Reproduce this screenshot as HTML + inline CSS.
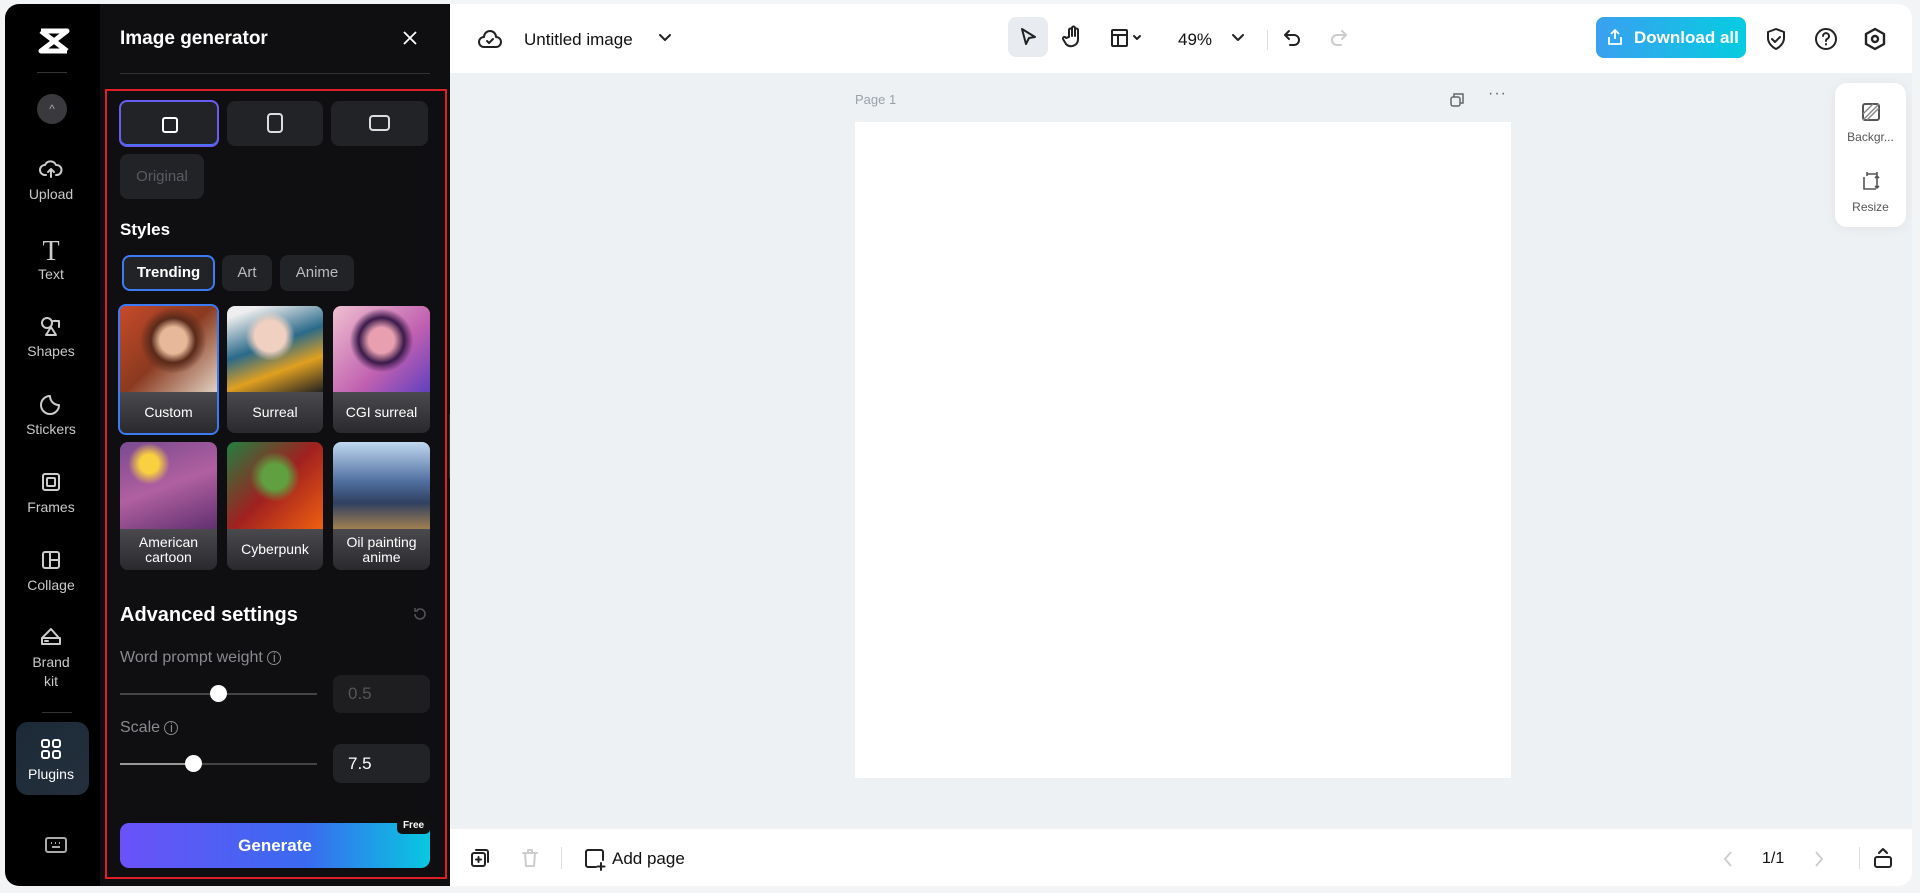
<!DOCTYPE html>
<html><head><meta charset="utf-8"><style>
*{box-sizing:border-box;margin:0;padding:0}
body{width:1920px;height:893px;overflow:hidden;background:#f3f4f6;font-family:"Liberation Sans",sans-serif;position:relative}
.abs{position:absolute}
.side{left:5px;top:4px;width:96px;height:882px;background:#000;border-radius:14px 0 0 14px}
.nav{position:absolute;left:0;width:92px;text-align:center;color:#c9c9cc;font-size:14px}
.nav svg{display:block;margin:0 auto 6px}
.panel{left:100px;top:4px;width:350px;height:882px;background:#0f0f11}
.main{left:450px;top:4px;width:1462px;height:882px;background:#eef1f4;border-radius:0 14px 14px 0;overflow:hidden}
.btn{position:absolute;background:#222327;border-radius:8px}
.card{position:absolute;border-radius:8px;overflow:hidden;background:#2a2a2e}
.card .lab{position:absolute;left:0;right:0;bottom:0;height:41px;background:linear-gradient(#4a4a4e,#2a2a2e);color:#fff;font-size:14px;display:flex;align-items:center;justify-content:center;text-align:center;line-height:15px}
.card .im{position:absolute;left:0;right:0;top:0;bottom:41px}
.ico{stroke:#222;fill:none;stroke-width:2;stroke-linecap:round;stroke-linejoin:round}
</style></head><body>
<div class="abs side">
 <svg class="abs" style="left:32px;top:23px" width="34" height="28" viewBox="0 0 34 28"><path d="M4 4h26L4 24h26M4 4l26 20" stroke="#fff" stroke-width="5" stroke-linejoin="round" fill="none"/></svg>
 <div class="abs" style="left:32px;top:68px;width:30px;height:1px;background:#333"></div>
 <div class="abs" style="left:32px;top:90px;width:30px;height:30px;border-radius:50%;background:#3a3a3e;color:#aaa;font-size:12px;text-align:center;line-height:30px">^</div>
 <div class="nav" style="top:154px"><svg width="24" height="22" viewBox="0 0 24 22" class="ico" style="stroke:#ccc"><path d="M7 17H6a5 5 0 0 1 0-10 6 6 0 0 1 11 0 5 5 0 0 1 1 10h-1M12 19v-8M9 14l3-3 3 3"/></svg>Upload</div>
 <div class="nav" style="top:234px"><div style="font-family:'Liberation Serif';font-size:28px;line-height:28px;color:#ccc">T</div>Text</div>
 <div class="nav" style="top:311px"><svg width="24" height="22" viewBox="0 0 24 22" class="ico" style="stroke:#ccc"><circle cx="8" cy="8" r="5"/><path d="M14 6h6v6M12 12l-5 8h10z"/></svg>Shapes</div>
 <div class="nav" style="top:389px"><svg width="24" height="22" viewBox="0 0 24 22" class="ico" style="stroke:#ccc"><path d="M20 12a9 9 0 1 1-9-9c0 5 4 9 9 9z"/></svg>Stickers</div>
 <div class="nav" style="top:467px"><svg width="24" height="22" viewBox="0 0 24 22" class="ico" style="stroke:#ccc"><rect x="4" y="3" width="16" height="16" rx="2"/><rect x="8" y="7" width="8" height="8" rx="1"/></svg>Frames</div>
 <div class="nav" style="top:545px"><svg width="24" height="22" viewBox="0 0 24 22" class="ico" style="stroke:#ccc"><rect x="4" y="3" width="16" height="16" rx="2"/><path d="M11 3v16M11 11h9"/></svg>Collage</div>
 <div class="nav" style="top:621px;line-height:19px"><svg width="24" height="22" viewBox="0 0 24 22" class="ico" style="stroke:#ccc"><path d="M3 13l9-9 8 9M3 13h18v6H3zM6 16h3"/></svg>Brand<br>kit</div>
 <div class="abs" style="left:37px;top:708px;width:30px;height:1px;background:#333"></div>
 <div class="abs" style="left:11px;top:718px;width:73px;height:73px;border-radius:12px;background:linear-gradient(135deg,#1c2a38,#24303c)"></div>
 <div class="nav" style="top:734px;color:#fff"><svg width="24" height="22" viewBox="0 0 24 22" class="ico" style="stroke:#fff"><rect x="3" y="2" width="7" height="7" rx="2"/><rect x="14" y="2" width="7" height="7" rx="2"/><rect x="3" y="13" width="7" height="7" rx="2"/><rect x="14" y="13" width="7" height="7" rx="2"/></svg>Plugins</div>
 <svg class="abs" style="left:40px;top:832px" width="22" height="18" viewBox="0 0 22 18"><rect x="1" y="2" width="20" height="14" rx="2" fill="none" stroke="#aaa" stroke-width="2"/><path d="M6 7h1M10 7h1M14 7h1M7 11h8" stroke="#aaa" stroke-width="2"/></svg>
</div>
<div class="abs panel">
 <div class="abs" style="left:20px;top:24px;color:#fff;font-size:19px;font-weight:bold">Image generator</div>
 <svg class="abs" style="left:302px;top:26px" width="16" height="16" viewBox="0 0 16 16"><path d="M2 2l12 12M14 2L2 14" stroke="#fff" stroke-width="1.8"/></svg>
 <div class="abs" style="left:20px;top:69px;width:310px;height:1px;background:#333"></div>
 <div class="abs" style="left:5px;top:85px;width:342px;height:790px;border:2px solid #e01e25"></div>
 <div class="btn" style="left:19px;top:96px;width:100px;height:47px;border:2px solid #6a5cf0;box-shadow:inset 0 -1px 0 #3d7bf5"><div style="position:absolute;left:41px;top:15px;width:16px;height:16px;border:2px solid #fff;border-radius:3px"></div></div>
 <div class="btn" style="left:127px;top:97px;width:96px;height:45px"><div style="position:absolute;left:40px;top:12px;width:16px;height:20px;border:2px solid #ddd;border-radius:4px"></div></div>
 <div class="btn" style="left:231px;top:97px;width:97px;height:45px"><div style="position:absolute;left:38px;top:14px;width:21px;height:16px;border:2px solid #ddd;border-radius:4px"></div></div>
 <div class="btn" style="left:20px;top:150px;width:84px;height:45px;color:#5a5a60;font-size:15px;text-align:center;line-height:45px">Original</div>
 <div class="abs" style="left:20px;top:216px;color:#fff;font-size:17px;font-weight:bold">Styles</div>
 <div class="btn" style="left:22px;top:251px;width:93px;height:36px;border:2px solid #3d7bf5;color:#fff;font-weight:bold;font-size:15px;text-align:center;line-height:32px">Trending</div>
 <div class="btn" style="left:122px;top:251px;width:50px;height:36px;color:#bbb;font-size:15px;text-align:center;line-height:36px">Art</div>
 <div class="btn" style="left:180px;top:251px;width:74px;height:36px;color:#bbb;font-size:15px;text-align:center;line-height:36px">Anime</div>

 <div class="card" style="left:18px;top:300px;width:101px;height:131px;border:2px solid #3d7bf5"><div class="im" style="background:radial-gradient(circle at 55% 40%,#e8b89a 0 18%,#5a2a1a 30%,transparent 45%),linear-gradient(135deg,#c84a2a,#8a3a20 50%,#e0d0c0)"></div><div class="lab">Custom</div></div>
 <div class="card" style="left:127px;top:302px;width:96px;height:127px"><div class="im" style="background:radial-gradient(circle at 45% 35%,#f0d0c0 0 20%,transparent 32%),linear-gradient(160deg,#eee 10%,#2a6a8a 45%,#e0a020 70%,#222)"></div><div class="lab">Surreal</div></div>
 <div class="card" style="left:233px;top:302px;width:97px;height:127px"><div class="im" style="background:radial-gradient(circle at 50% 40%,#e8a0b0 0 18%,#3a1a4a 32%,transparent 45%),linear-gradient(135deg,#f0c0d0,#c060b0 60%,#6040c0)"></div><div class="lab">CGI surreal</div></div>
 <div class="card" style="left:20px;top:438px;width:97px;height:128px"><div class="im" style="background:radial-gradient(circle at 30% 25%,#f8d040 0 10%,transparent 22%),linear-gradient(160deg,#7a4a90,#b060a0 50%,#603070)"></div><div class="lab">American<br>cartoon</div></div>
 <div class="card" style="left:127px;top:438px;width:96px;height:128px"><div class="im" style="background:radial-gradient(circle at 50% 40%,#60a040 0 18%,transparent 35%),linear-gradient(135deg,#208040,#a02020 50%,#f06010)"></div><div class="lab">Cyberpunk</div></div>
 <div class="card" style="left:233px;top:438px;width:97px;height:128px"><div class="im" style="background:linear-gradient(180deg,#c0d8f0,#5070a0 45%,#304060 70%,#a08050)"></div><div class="lab">Oil painting<br>anime</div></div>

 <div class="abs" style="left:20px;top:600px;color:#fff;font-size:20px;font-weight:bold">Advanced settings</div>
 <svg class="abs" style="left:312px;top:602px" width="16" height="16" viewBox="0 0 16 16"><path d="M3 8a5 5 0 1 0 2-4M3 2v3h3" stroke="#555" stroke-width="1.5" fill="none"/></svg>
 <div class="abs" style="left:20px;top:645px;color:#8a8a90;font-size:16px">Word prompt weight <span style="font-size:13px;border:1.5px solid #888;border-radius:50%;display:inline-block;width:14px;height:14px;line-height:12px;text-align:center">i</span></div>
 <div class="abs" style="left:20px;top:689px;width:197px;height:2px;background:#444"></div>
 <div class="abs" style="left:110px;top:681px;width:17px;height:17px;border-radius:50%;background:#fff"></div>
 <div class="btn" style="left:233px;top:671px;width:97px;height:38px;background:#1e1e21;color:#555;font-size:17px;line-height:38px;padding-left:15px">0.5</div>
 <div class="abs" style="left:20px;top:715px;color:#8a8a90;font-size:16px">Scale <span style="font-size:13px;border:1.5px solid #888;border-radius:50%;display:inline-block;width:14px;height:14px;line-height:12px;text-align:center">i</span></div>
 <div class="abs" style="left:20px;top:759px;width:197px;height:2px;background:#444"></div>
 <div class="abs" style="left:20px;top:759px;width:74px;height:2px;background:#999"></div>
 <div class="abs" style="left:85px;top:751px;width:17px;height:17px;border-radius:50%;background:#fff"></div>
 <div class="btn" style="left:233px;top:740px;width:97px;height:39px;color:#fff;font-size:17px;line-height:39px;padding-left:15px">7.5</div>
 <div class="abs" style="left:20px;top:819px;width:310px;height:45px;border-radius:9px;background:linear-gradient(90deg,#6a52f8,#3a6af0 60%,#08c8e0);color:#fff;font-size:17px;font-weight:bold;text-align:center;line-height:45px">Generate</div>
 <div class="abs" style="left:297px;top:814px;width:33px;height:16px;border-radius:5px;background:#111;color:#fff;font-size:10px;font-weight:bold;text-align:center;line-height:16px">Free</div>
</div>
<div class="abs" style="left:449px;top:414px;width:9px;height:64px;background:#2a2a2e;border-radius:0 8px 8px 0"></div>
<div class="abs main">
 <div class="abs" style="left:0;top:0;width:1462px;height:69px;background:#fff"></div>
 <svg class="abs" style="left:28px;top:24px" width="24" height="22" viewBox="0 0 24 22"><path d="M7 19H6a5 5 0 0 1 0-10 6 6 0 0 1 12 0 5 5 0 0 1 0 10H7z M9 13l2 2 4-4" class="ico"/></svg>
 <div class="abs" style="left:74px;top:26px;font-size:17px;color:#111">Untitled image</div>
 <svg class="abs" style="left:208px;top:29px" width="14" height="10" viewBox="0 0 14 10"><path d="M2 2l5 5 5-5" class="ico"/></svg>
 <div class="abs" style="left:558px;top:13px;width:40px;height:40px;border-radius:8px;background:#e8ebef"></div>
 <svg class="abs" style="left:567px;top:22px" width="22" height="22" viewBox="0 0 22 22"><path d="M5 3l13 8-6 1-3 6z" class="ico"/></svg>
 <svg class="abs" style="left:612px;top:21px" width="22" height="24" viewBox="0 0 22 24"><path d="M7 12V5a1.5 1.5 0 0 1 3 0v6V3a1.5 1.5 0 0 1 3 0v8V5a1.5 1.5 0 0 1 3 0v10a7 7 0 0 1-12 4l-3-5a1.5 1.5 0 0 1 3-1z" class="ico"/></svg>
 <svg class="abs" style="left:660px;top:24px" width="36" height="20" viewBox="0 0 36 20"><rect x="2" y="2" width="15" height="16" rx="1" class="ico"/><path d="M2 7h15M8 7v11M24 8l3 3 3-3" class="ico"/></svg>
 <div class="abs" style="left:728px;top:26px;font-size:17px;color:#111">49%</div>
 <svg class="abs" style="left:781px;top:29px" width="14" height="10" viewBox="0 0 14 10"><path d="M2 2l5 5 5-5" class="ico"/></svg>
 <div class="abs" style="left:817px;top:26px;width:1px;height:20px;background:#ddd"></div>
 <svg class="abs" style="left:832px;top:24px" width="22" height="22" viewBox="0 0 22 22"><path d="M7 3L3 7l4 4M3 7h9a5 5 0 0 1 0 10H8" class="ico"/></svg>
 <svg class="abs" style="left:877px;top:24px" width="22" height="22" viewBox="0 0 22 22"><path d="M15 3l4 4-4 4M19 7h-9a5 5 0 0 0 0 10h4" class="ico" style="stroke:#ccc"/></svg>
 <div class="abs" style="left:1146px;top:13px;width:150px;height:41px;border-radius:8px;background:linear-gradient(90deg,#3aa0f0,#06cce0);color:#fff;font-weight:bold;font-size:17px;line-height:41px;padding-left:38px">Download all</div>
 <svg class="abs" style="left:1156px;top:24px" width="18" height="18" viewBox="0 0 18 18"><path d="M9 11V2M5 6l4-4 4 4M3 9v7h12V9" stroke="#fff" stroke-width="1.8" fill="none"/></svg>
 <svg class="abs" style="left:1314px;top:23px" width="24" height="24" viewBox="0 0 24 24"><path d="M12 2l8 3v6c0 5-4 9-8 11-4-2-8-6-8-11V5z M8 12l3 3 5-5" class="ico"/></svg>
 <svg class="abs" style="left:1364px;top:23px" width="24" height="24" viewBox="0 0 24 24"><circle cx="12" cy="12" r="10" class="ico"/><path d="M9 9a3 3 0 1 1 4 3c-1 .5-1 1-1 2M12 17v.5" class="ico"/></svg>
 <svg class="abs" style="left:1413px;top:23px" width="24" height="24" viewBox="0 0 24 24"><path d="M12 2l9 5v10l-9 5-9-5V7z" class="ico" style="stroke-width:2.4"/><circle cx="12" cy="12" r="3" class="ico" style="stroke-width:2.4"/></svg>
 <div class="abs" style="left:405px;top:88px;font-size:13px;color:#9aa0a8">Page 1</div>
 <svg class="abs" style="left:999px;top:88px" width="16" height="16" viewBox="0 0 16 16"><rect x="2" y="5" width="9" height="9" rx="2" fill="none" stroke="#666" stroke-width="1.5"/><path d="M5 5V2h9v9h-3" fill="none" stroke="#666" stroke-width="1.5"/></svg>
 <div class="abs" style="left:1038px;top:85px;font-size:16px;color:#666;letter-spacing:1px;line-height:10px">···</div>
 <div class="abs" style="left:405px;top:118px;width:656px;height:656px;background:#fff"></div>
 <div class="abs" style="left:1385px;top:79px;width:71px;height:144px;background:#fff;border-radius:12px;box-shadow:0 2px 12px rgba(0,0,0,.06)"></div>
 <svg class="abs" style="left:1411px;top:98px" width="20" height="20" viewBox="0 0 20 20"><rect x="2" y="2" width="16" height="16" rx="2" fill="none" stroke="#555" stroke-width="2"/><path d="M2 12l10-10M6 18L18 6M2 18l16-16" stroke="#888" stroke-width="1.5"/></svg>
 <div class="abs" style="left:1385px;top:126px;width:71px;text-align:center;font-size:12px;color:#555">Backgr...</div>
 <svg class="abs" style="left:1411px;top:167px" width="20" height="20" viewBox="0 0 20 20"><path d="M3 6v12h12M6 3h10M16 6v11M6 1v4M16 1v4M14 7l2-2 2 2M14 15l2 2 2-2" fill="none" stroke="#555" stroke-width="1.6"/></svg>
 <div class="abs" style="left:1385px;top:196px;width:71px;text-align:center;font-size:12px;color:#555">Resize</div>
 <div class="abs" style="left:0;top:825px;width:1462px;height:57px;background:#fff"></div>
 <svg class="abs" style="left:19px;top:843px" width="22" height="22" viewBox="0 0 22 22"><rect x="3" y="6" width="13" height="13" rx="2" class="ico"/><path d="M7 3h10a2 2 0 0 1 2 2v10M9.5 10v5M7 12.5h5" class="ico"/></svg>
 <svg class="abs" style="left:69px;top:843px" width="22" height="22" viewBox="0 0 22 22"><path d="M4 6h14M9 6V3h4v3M6 6l1 13h8l1-13" class="ico" style="stroke:#ccc"/></svg>
 <div class="abs" style="left:111px;top:843px;width:1px;height:22px;background:#ddd"></div>
 <svg class="abs" style="left:133px;top:843px" width="24" height="24" viewBox="0 0 24 24"><path d="M13 20H5a2 2 0 0 1-2-2V5a2 2 0 0 1 2-2h13a2 2 0 0 1 2 2v8M18 16v7M14.5 19.5h7" class="ico"/></svg>
 <div class="abs" style="left:162px;top:845px;font-size:17px;color:#111">Add page</div>
 <svg class="abs" style="left:1272px;top:846px" width="12" height="18" viewBox="0 0 12 18"><path d="M9 2L3 9l6 7" stroke="#ccc" stroke-width="1.8" fill="none"/></svg>
 <div class="abs" style="left:1312px;top:846px;font-size:16px;color:#111">1/1</div>
 <svg class="abs" style="left:1363px;top:846px" width="12" height="18" viewBox="0 0 12 18"><path d="M3 2l6 7-6 7" stroke="#ccc" stroke-width="1.8" fill="none"/></svg>
 <div class="abs" style="left:1409px;top:843px;width:1px;height:22px;background:#ddd"></div>
 <svg class="abs" style="left:1422px;top:843px" width="22" height="22" viewBox="0 0 22 22"><rect x="3" y="10" width="16" height="10" rx="2" class="ico"/><path d="M7 6l4-4 4 4" class="ico"/></svg>
</div>
</body></html>
